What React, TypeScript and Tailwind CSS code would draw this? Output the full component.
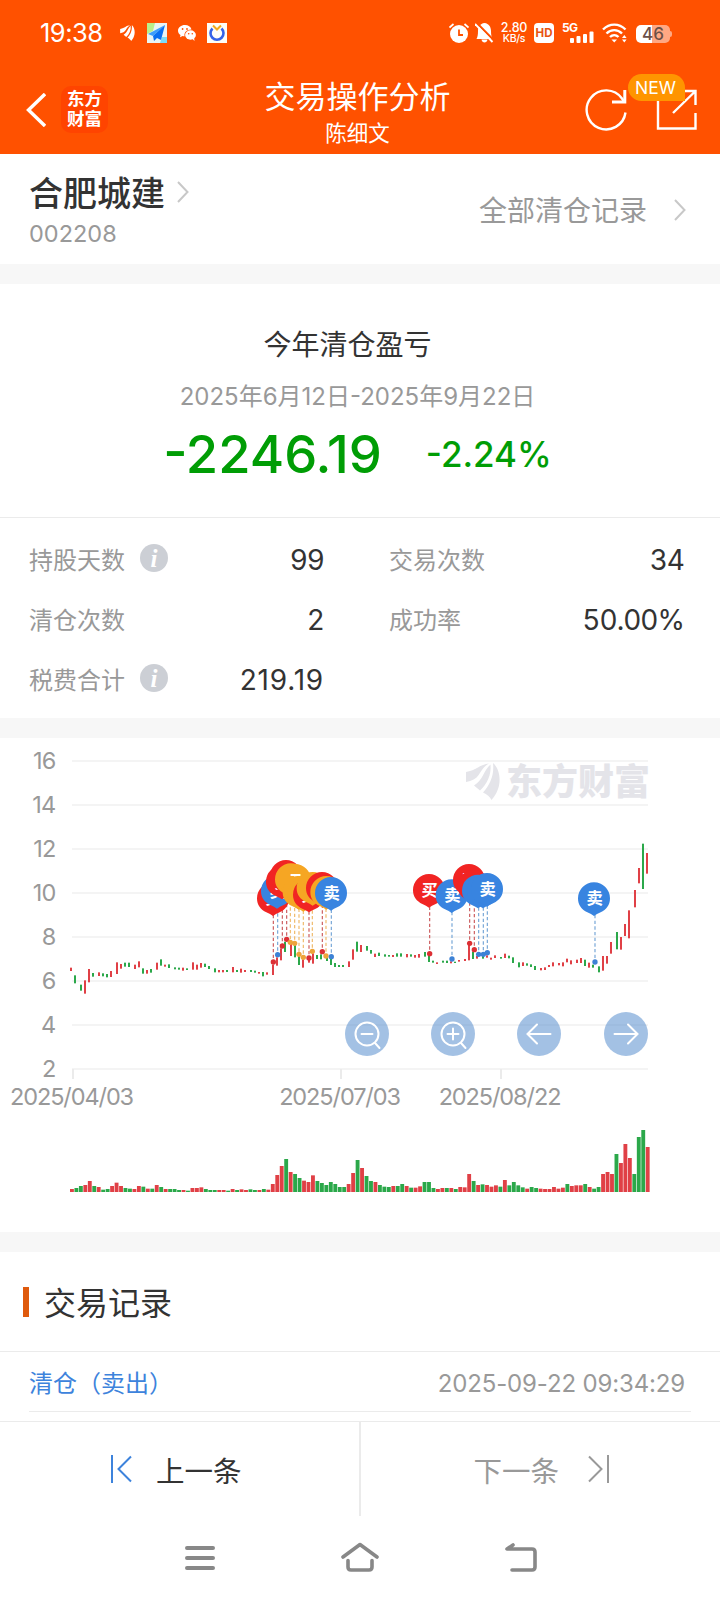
import type { ReactNode } from 'react';

type Tone = 'r' | 'g';
type PinKind = 'buy' | 'sell' | 't';

interface Pin {
    kind: PinKind;
    cx: number;
    cy: number;
    x: number;
    y: number;
    covered?: boolean;
}

const UP = '#e04046';
const DOWN = '#2ba84a';

// [tone, x, high, low] in plot units, three units per pixel
const CANDLES: [Tone, number, number, number][] = [
    ['r', 213, 683, 693], ['g', 225, 706, 730], ['g', 243, 734, 752], ['r', 255, 721, 761], ['r', 267, 687, 727],
    ['g', 279, 699, 710], ['r', 297, 697, 708], ['g', 309, 700, 709], ['g', 321, 702, 712], ['r', 333, 693, 711],
    ['r', 351, 667, 702], ['r', 363, 672, 686], ['g', 375, 668, 680], ['g', 387, 668, 681], ['r', 405, 674, 687],
    ['r', 417, 664, 682], ['g', 429, 685, 701], ['r', 441, 690, 701], ['g', 453, 687, 698], ['r', 471, 668, 689],
    ['g', 483, 658, 677], ['r', 495, 674, 680], ['g', 507, 673, 684], ['g', 525, 682, 688], ['g', 537, 683, 689],
    ['r', 549, 683, 692], ['g', 561, 685, 690], ['r', 579, 667, 689], ['r', 591, 674, 689], ['r', 603, 669, 683],
    ['g', 615, 671, 681], ['g', 627, 678, 687], ['g', 645, 685, 697], ['r', 657, 690, 697], ['r', 669, 690, 697],
    ['g', 681, 690, 696], ['r', 699, 681, 697], ['g', 711, 690, 696], ['r', 723, 686, 698], ['r', 735, 690, 696],
    ['g', 753, 690, 696], ['g', 765, 692, 698], ['r', 777, 696, 701], ['g', 789, 696, 709], ['r', 801, 697, 704],
    ['r', 819, 674, 705], ['r', 831, 652, 677], ['r', 843, 625, 661], ['g', 855, 605, 636], ['r', 873, 612, 648],
    ['g', 885, 608, 652], ['g', 897, 646, 675], ['r', 909, 658, 683], ['r', 927, 650, 668], ['r', 939, 640, 671],
    ['g', 951, 645, 657], ['g', 963, 643, 658], ['g', 981, 652, 663], ['g', 993, 654, 675], ['g', 1005, 669, 681],
    ['g', 1017, 675, 681], ['g', 1029, 675, 681], ['r', 1047, 664, 681], ['r', 1059, 628, 659], ['g', 1071, 605, 635],
    ['r', 1083, 615, 636], ['g', 1101, 618, 632], ['g', 1113, 630, 641], ['r', 1125, 641, 651], ['g', 1137, 638, 648],
    ['g', 1155, 643, 650], ['g', 1167, 645, 650], ['r', 1179, 645, 651], ['g', 1191, 640, 650], ['g', 1203, 640, 650],
    ['r', 1221, 642, 652], ['g', 1233, 643, 650], ['r', 1245, 645, 653], ['r', 1257, 642, 653], ['g', 1275, 636, 650],
    ['g', 1287, 648, 666], ['g', 1299, 662, 668], ['r', 1311, 667, 672], ['g', 1329, 662, 668], ['g', 1341, 662, 669],
    ['r', 1353, 664, 670], ['g', 1365, 665, 669], ['r', 1377, 660, 665], ['r', 1395, 657, 663], ['r', 1407, 615, 661],
    ['g', 1419, 635, 657], ['r', 1431, 648, 656], ['g', 1449, 648, 656], ['r', 1461, 646, 653], ['r', 1473, 653, 659],
    ['r', 1485, 646, 654], ['g', 1503, 651, 656], ['r', 1515, 641, 654], ['g', 1527, 647, 655], ['g', 1539, 652, 669],
    ['g', 1557, 667, 682], ['r', 1569, 667, 678], ['g', 1581, 670, 677], ['g', 1593, 673, 681], ['g', 1605, 678, 690],
    ['r', 1623, 684, 691], ['r', 1635, 682, 690], ['r', 1647, 675, 681], ['r', 1659, 667, 679], ['r', 1677, 669, 676],
    ['r', 1689, 667, 679], ['r', 1701, 656, 667], ['r', 1713, 661, 673], ['r', 1731, 659, 669], ['r', 1743, 654, 669],
    ['g', 1755, 659, 678], ['r', 1767, 668, 683], ['g', 1779, 674, 683], ['g', 1797, 679, 697], ['r', 1809, 648, 692],
    ['r', 1821, 648, 671], ['r', 1833, 606, 641], ['g', 1851, 576, 628], ['r', 1863, 591, 629], ['r', 1875, 552, 588],
    ['r', 1887, 511, 595], ['r', 1905, 450, 502], ['r', 1917, 384, 430], ['g', 1929, 311, 447], ['r', 1941, 339, 401],
];

// one entry per trading day, same units as the candles
const VOLUMES =
    'r9 g12 g18 r21 r33 g18 r15 g7 g9 r18 r28 r18 g12 g10 r9 r18 g16 r10 g10 r21 g15 r9 g9 g9 g6 r6 g4 r12 r12 r14 g9 g6 g6 r6 r6 g4 r9 g6 r8 r6 g8 g6 r6 g9 r7 r24 r51 r78 g99 r60 g54 g42 r34 r30 r50 g33 g27 g21 g30 g24 g15 g15 r24 r57 g96 r72 g48 g33 r30 g21 g16 g15 r18 g18 g24 r18 g13 r13 r17 g30 g30 g12 r9 r12 g12 r12 g9 r15 r14 r54 g33 r21 g23 r21 r16 r20 g16 r36 g20 g30 g20 g14 r10 g15 g12 r10 r9 r9 r15 r10 r13 g24 r18 r20 r20 g24 r15 g10 g15 r54 r60 r54 g114 r87 r144 r102 g54 g165 g186 r135'
        .split(' ')
        .map(v => ({ tone: v[0] as Tone, h: Number(v.slice(1)) }));

// covered pins sit fully behind the next one and carry no label
const PINS: Pin[] = [
    { kind: 'buy', cx: 819, cy: 475, x: 820, y: 666 },
    { kind: 'sell', cx: 831, cy: 453, x: 833, y: 644 },
    { kind: 'buy', cx: 846, cy: 425, x: 847, y: 618 },
    { kind: 'buy', cx: 858, cy: 408, x: 860, y: 598, covered: true },
    { kind: 't', cx: 873, cy: 418, x: 871, y: 607, covered: true },
    { kind: 't', cx: 885, cy: 420, x: 884, y: 610 },
    { kind: 't', cx: 896, cy: 456, x: 897, y: 643, covered: true },
    { kind: 't', cx: 910, cy: 462, x: 910, y: 652, covered: true },
    { kind: 'buy', cx: 927, cy: 464, x: 927, y: 654 },
    { kind: 't', cx: 938, cy: 444, x: 937, y: 634, covered: true },
    { kind: 'buy', cx: 966, cy: 444, x: 967, y: 635, covered: true },
    { kind: 't', cx: 979, cy: 456, x: 978, y: 648, covered: true },
    { kind: 'sell', cx: 993, cy: 459, x: 994, y: 650 },
    { kind: 'buy', cx: 1287, cy: 450, x: 1289, y: 641 },
    { kind: 'sell', cx: 1355, cy: 466, x: 1356, y: 657 },
    { kind: 'buy', cx: 1407, cy: 420, x: 1409, y: 610 },
    { kind: 'buy', cx: 1421, cy: 438, x: 1423, y: 629, covered: true },
    { kind: 'sell', cx: 1434, cy: 452, x: 1436, y: 643, covered: true },
    { kind: 'sell', cx: 1449, cy: 452, x: 1450, y: 643, covered: true },
    { kind: 'sell', cx: 1461, cy: 447, x: 1462, y: 638 },
    { kind: 'sell', cx: 1782, cy: 475, x: 1785, y: 666 },
];

const PIN_STYLE: Record<PinKind, { fill: string; dot: string; line: string; label: string }> = {
    buy: { fill: '#f12423', dot: '#dc2f34', line: '#cc5a5c', label: '买' },
    sell: { fill: '#3884e0', dot: '#3d82d6', line: '#74a5d6', label: '卖' },
    t: { fill: '#f6a623', dot: '#eda43a', line: '#efb968', label: 'T' },
};

const STATS = [
    { label: '持股天数', value: '99', info: true },
    { label: '交易次数', value: '34' },
    { label: '清仓次数', value: '2' },
    { label: '成功率', value: '50.00%' },
    { label: '税费合计', value: '219.19', info: true, wide: true },
];

function Feathers({ className }: { className?: string }) {
    return (
        <svg viewBox="0 0 34 37" className={className} fill="currentColor">
            <path d="M0 9C6 8 9 6 12 4.500 15 2.500 19 1 23 0.500 18 3 16 7 13 11.500 10 16 6 18 0 19Z" />
            <path d="M24.500 1.500C18 7 17 17 8 22.500L14 27.500C21 21 25.500 12 24.500 1.500Z" />
            <path d="M27 0C34 6 35 18 32 26 30 32 27 35 25.500 37 24 34 21 31 17 29.500 24 22 28.500 12 27 0Z" />
        </svg>
    );
}

function Chevron() {
    return (
        <svg width="12" height="22" viewBox="0 0 12 22" fill="none" stroke="#c8c8c8" strokeWidth="2">
            <path d="M1 1L10.500 11L1 21" />
        </svg>
    );
}

function StatusBar() {
    return (
        <div className="flex h-[66px] items-center pl-10 pr-12">
            <span className="w-20 text-[25.5px] tracking-[-0.5px]">19:38</span>
            <Feathers className="h-4 w-[15px]" />
            <svg className="ml-3" width="20" height="20" viewBox="0 0 20 20">
                <rect width="20" height="20" fill="#e9f4f3" />
                <path d="M0 0H8L6 8L0 11Z" fill="#b9ef8b" />
                <path d="M15 14H20V20H13Z" fill="#7cdcf7" />
                <path d="M18 2L1 11L6 13Z" fill="#3b9dfb" />
                <path d="M18 2L6 13L7 18L10 15L14 17Z" fill="#0a6ff0" />
            </svg>
            <svg className="ml-[11px]" width="18" height="16" viewBox="0 0 18 16" fill="white">
                <path d="M7 0C3 0 0 2.500 0 5.700 0 7.500 1 9 2.500 10L2 12.300 4.600 11C5.300 11.200 6 11.300 6.600 11.300 5.700 7.500 8.500 4.400 13.500 4.400 12.800 1.800 10.200 0 7 0Z" />
                <ellipse cx="12.500" cy="10" rx="5.400" ry="4.700" />
                <path d="M14 13.500L16.500 16L16 12Z" />
                <g fill="#ff5100">
                    <circle cx="4.600" cy="4" r="0.900" />
                    <circle cx="9" cy="4" r="0.900" />
                    <circle cx="10.700" cy="8.700" r="0.800" />
                    <circle cx="14.300" cy="8.700" r="0.800" />
                </g>
            </svg>
            <svg className="ml-[11px]" width="20" height="20" viewBox="0 0 20 20" fill="none">
                <rect width="20" height="20" fill="#fdfdf8" />
                <path d="M5.500 5.500A6.500 6.500 0 1 0 14.500 5.500" stroke="#3562e8" strokeWidth="2.600" />
                <path d="M6 2.500L10 6.500L14 2.500" stroke="#f2a91c" strokeWidth="2" />
            </svg>

            <svg className="ml-auto" width="20" height="20" viewBox="0 0 20 20" fill="none">
                <circle cx="10" cy="11" r="9" fill="white" />
                <path d="M0.500 4.500L4.500 1M19.500 4.500L15.500 1" stroke="white" strokeWidth="1.700" />
                <path d="M10 6.500V12H14" stroke="#ff5100" strokeWidth="1.800" />
            </svg>
            <svg className="ml-[6px]" width="19" height="20" viewBox="0 0 19 20" fill="none">
                <path d="M9.500 0C14 0.500 16 4 16 8C16 12 16.500 14 17.500 16H1.500C2.500 14 3 12 3 8C3 4 5 0.500 9.500 0Z" fill="white" />
                <path d="M6.500 16.500H12.500C12 20.500 7 20.500 6.500 16.500Z" fill="white" />
                <path d="M1.800 0L19 17.500" stroke="#ff5100" strokeWidth="2.200" />
                <path d="M0 1L17.500 19" stroke="white" strokeWidth="1.900" />
            </svg>
            <div className="ml-[7px] flex w-[26px] flex-col items-center font-medium">
                <span className="text-[12.5px] leading-[11px] tracking-[-0.2px]">2.80</span>
                <span className="text-[10.5px] leading-[11px] tracking-[-0.3px]">KB/s</span>
            </div>
            <span className="ml-[7px] flex h-5 w-5 items-center justify-center rounded bg-white pt-px text-[11.5px] font-bold text-[#e8540f]">
                HD
            </span>
            <div className="ml-2 flex h-5 w-8 items-end">
                <span className="-mr-[7px] w-[15px] shrink-0 self-start text-[12px] font-bold leading-[10px] tracking-[-0.6px]">5G</span>
                <svg className="shrink-0" width="24" height="12" viewBox="0 0 24 12" fill="white">
                    <rect x="0" y="7" width="4" height="5" rx="1" />
                    <rect x="6.500" y="5" width="4" height="7" rx="1" />
                    <rect x="13" y="3" width="4" height="9" rx="1" />
                    <rect x="19.500" y="0.500" width="4" height="11.500" rx="1" />
                </svg>
            </div>
            <svg className="ml-2" width="25" height="20" viewBox="0 0 25 20" fill="none" stroke="white" strokeWidth="2.400">
                <path d="M1 6.500C7.500 0 17 0 23.500 6.500" />
                <path d="M4.500 10.500C9 6 15.500 6 20 10.500" />
                <path d="M8 14C10.500 11.500 14 11.500 16.500 14" />
                <path d="M9.500 16.500H15L12.250 19.500Z" fill="white" stroke="none" />
                <path d="M20 15L22.300 12L24.600 15ZM20 16.500H24.600L22.300 19.500Z" fill="white" stroke="none" />
            </svg>
            <div className="ml-[9px] mt-0.5 flex items-center">
                <span className="flex h-[18px] w-[34px] items-center justify-center rounded-[5px] bg-linear-to-r from-white from-46% to-[#ffa883] to-46% pt-px text-[17px] font-medium text-[#6b5048]">
                    46
                </span>
                <span className="h-1.5 w-0.5 rounded-r bg-[#ffa883]" />
            </div>
        </div>
    );
}

function Header() {
    return (
        <header className="h-[154px] bg-[#ff5100] text-white">
            <StatusBar />
            <div className="flex h-[88px] items-start pl-[26px] pr-[23px]">
                <div className="flex w-[210px] items-center pt-5">
                    <svg width="20" height="34" viewBox="0 0 20 34" fill="none" stroke="white" strokeWidth="3.400">
                        <path d="M19 1L2.500 17L19 33" />
                    </svg>
                    <div className="ml-[15px] flex h-[47px] w-[47px] flex-col items-center justify-center rounded-[10px] bg-[#ff4400] pb-px text-[17.5px] font-bold leading-[20px]">
                        <span>东方</span>
                        <span>财富</span>
                    </div>
                </div>
                <div className="flex flex-1 flex-col items-center pt-[9px]">
                    <h1 className="text-[31px] leading-[44px]">交易操作分析</h1>
                    <p className="pt-px text-[21.5px] leading-[26px]">陈细文</p>
                </div>
                <div className="flex w-[218px] justify-end gap-[29px] pt-[23px]">
                    <svg width="42" height="42" viewBox="0 0 42 42" fill="none" stroke="white" strokeWidth="2.400">
                        <path d="M40.500 23.500A19.500 19.500 0 1 1 37 9.500L39 12.500" />
                        <path d="M39.800 1V13H27" strokeWidth="3" />
                    </svg>
                    <div className="relative">
                        <svg width="41" height="41" viewBox="0 0 41 41" fill="none" stroke="white" strokeWidth="2.400">
                            <path d="M14 2H2V39.500H39.500V24" />
                            <path d="M28 2H39.500V16M39 2.500L17 24" />
                        </svg>
                        <span className="absolute -left-[28px] -top-[15px] flex h-[27px] w-[57px] items-center justify-center rounded-full rounded-br-md bg-[#ff9500] pt-px pr-0.5 text-[17.5px]">
                            NEW
                        </span>
                    </div>
                </div>
            </div>
        </header>
    );
}

function StockRow() {
    return (
        <section className="flex h-[110px] items-start justify-between pl-[29px] pr-[34px]">
            <div className="pt-[15px]">
                <div className="flex items-center gap-3">
                    <h2 className="pt-[3px] text-[34px] font-medium leading-[43px] text-[#333]">合肥城建</h2>
                    <Chevron />
                </div>
                <p className="pt-px text-[23.5px] leading-9 text-[#999]">002208</p>
            </div>
            <div className="flex items-center gap-[27px] pt-[31px] text-[28px] leading-12 text-[#999]">
                <span className="pt-0.5">全部清仓记录</span>
                <Chevron />
            </div>
        </section>
    );
}

function Summary() {
    return (
        <section className="flex h-[234px] flex-col items-center border-b border-[#ebebeb] pr-[5px] pt-[39px]">
            <h3 className="pr-[20px] text-[28px] leading-11 text-[#333]">今年清仓盈亏</h3>
            <p className="mt-2 text-[24px] leading-11 text-[#999]">2025年6月12日-2025年9月22日</p>
            <div className="mt-[3px] flex items-center gap-[44px] font-medium text-[#009d05]">
                <span className="text-[52.5px] leading-[64px]">-2246.19</span>
                <span className="text-[35px] leading-[60px]">-2.24%</span>
            </div>
        </section>
    );
}

function Stats() {
    return (
        <section className="grid h-[200px] grid-cols-2 content-start pt-[12px]">
            {STATS.map(stat => (
                <div key={stat.label} className="flex h-[60px] items-center pl-[29px] pr-9">
                    <span className="pt-0.5 text-[24px] text-[#999]">{stat.label}</span>
                    {stat.info && (
                        <span className="mb-1 ml-[15px] flex h-7 w-7 items-center justify-center rounded-full bg-[#cccfd5] font-['Liberation_Serif',serif] text-[25px] font-bold italic leading-none text-white">
                            i
                        </span>
                    )}
                    <span className={`ml-auto text-[28px] text-[#333] ${stat.wide ? 'tracking-[0.8px]' : 'tabular-nums tracking-[-1px]'}`}>
                        {stat.value}
                    </span>
                </div>
            ))}
        </section>
    );
}

function PinMark({ pin }: { pin: Pin }) {
    const style = PIN_STYLE[pin.kind];
    return (
        <g>
            <path
                transform={`translate(${pin.cx} ${pin.cy})`}
                d="M-48 0A48 48 0 1 1 48 0C48 20 37 34 20 42Q8 47 0 53Q-8 47 -20 42C-37 34 -48 20 -48 0Z"
                fill={style.fill}
            />
            {!pin.covered && (
                <text x={pin.cx + 2} y={pin.cy + 18} textAnchor="middle" fontSize="49" fontWeight="700" fill="white">
                    {style.label}
                </text>
            )}
        </g>
    );
}

function RoundButton({ cx, children }: { cx: number; children: ReactNode }) {
    return (
        <g transform={`translate(${cx} 1034)`} fill="none" stroke="white" strokeWidth="2" strokeLinecap="round">
            <circle r="22" fill="#4784c9" fillOpacity="0.5" stroke="none" />
            {children}
        </g>
    );
}

function Chart() {
    const levels = [16, 14, 12, 10, 8, 6, 4, 2];
    const dates = [
        { x: 73, label: '2025/04/03' },
        { x: 341, label: '2025/07/03' },
        { x: 501, label: '2025/08/22' },
    ];

    return (
        <svg className="block" width="720" height="494" viewBox="0 738 720 494">
            {levels.map((level, i) => (
                <g key={level}>
                    <rect x="72" y={760 + i * 44} width="576" height="2" fill="#f4f4f4" />
                    <text x="55.500" y={769 + i * 44} textAnchor="end" fontSize="23.500" letterSpacing="-0.800" fill="#999">
                        {level}
                    </text>
                </g>
            ))}
            {dates.map(date => (
                <g key={date.label}>
                    <rect x={date.x - 1} y="1069" width="2" height="10" fill="#ebebeb" />
                    <text x={date.x - 1.5} y="1105" textAnchor="middle" fontSize="23.500" letterSpacing="-1.100" fill="#999">
                        {date.label}
                    </text>
                </g>
            ))}

            {/* Watermark */}
            <g color="#e4e4e9">
                <svg x="466" y="763" width="34" height="37">
                    <Feathers />
                </svg>
                <text x="506" y="795" fontSize="36" fontWeight="900" fill="currentColor">
                    东方财富
                </text>
            </g>

            <g transform="translate(0 740) scale(0.33333)">
                {CANDLES.map(([tone, x, high, low]) => (
                    <rect key={x} x={x - 3} y={high} width="6" height={low - high} fill={tone === 'r' ? UP : DOWN} />
                ))}
                {PINS.map(pin => (
                    <g key={pin.x}>
                        <path
                            d={`M${pin.x} ${pin.cy + 50}V${pin.y}`}
                            stroke={PIN_STYLE[pin.kind].line}
                            strokeWidth="3.500"
                            strokeDasharray="10 7"
                        />
                        <circle cx={pin.x} cy={pin.y} r="8" fill={PIN_STYLE[pin.kind].dot} />
                    </g>
                ))}
                {PINS.map(pin => (
                    <PinMark key={pin.x} pin={pin} />
                ))}
            </g>

            {/* Zoom and pan */}
            <RoundButton cx={367}>
                <circle r="11.500" />
                <path d="M-5.500 0H5.500M8 9L12.500 14" />
            </RoundButton>
            <RoundButton cx={453}>
                <circle r="11.500" />
                <path d="M-5.500 0H5.500M0 -5.500V5.500M8 9L12.500 14" />
            </RoundButton>
            <RoundButton cx={539}>
                <path d="M11.500 0H-11.500M-2 -9.500L-11.500 0L-2 9.500" />
            </RoundButton>
            <RoundButton cx={626}>
                <path d="M-11.500 0H11.500M2 -9.500L11.500 0L2 9.500" />
            </RoundButton>

            <g transform="translate(70 1192) scale(0.33333)">
                {VOLUMES.map((bar, i) => (
                    <rect key={i} x={i * 13.39} y={-bar.h} width="11.600" height={bar.h} fill={bar.tone === 'r' ? UP : DOWN} />
                ))}
            </g>
        </svg>
    );
}

function Records() {
    return (
        <section className="h-[169px]">
            <div className="flex h-[100px] items-center gap-[15px] border-b border-[#ebebeb] pl-[23px]">
                <span className="h-[30px] w-1.5 bg-[#df5a0d]" />
                <h3 className="mt-1 text-[32px] text-[#333]">交易记录</h3>
            </div>
            <div className="mx-[29px] flex h-[60px] items-center justify-between border-b border-[#ebebeb] pr-[6px] pt-1 text-[24px]">
                <span className="text-[#3d83dc]">清仓（卖出）</span>
                <time className="text-[#999] tracking-[-0.15px]">2025-09-22 09:34:29</time>
            </div>
        </section>
    );
}

function Pager() {
    return (
        <div className="flex h-[95px] border-t border-[#ebebeb] text-[28.5px]">
            <button className="flex flex-1 items-center gap-[24px] border-r-2 border-[#ebebeb] pl-[111px] text-[#333]">
                <svg width="21" height="28" viewBox="0 0 21 28" fill="none" stroke="#3d83dc" strokeWidth="2">
                    <path d="M1 0V28M20 1.500L7.500 14L20 26.500" />
                </svg>
                <span className="pt-1.5">上一条</span>
            </button>
            <button className="flex flex-1 items-center justify-end gap-[29px] pr-[111px] text-[#999]">
                <span className="pt-1.5">下一条</span>
                <svg width="21" height="28" viewBox="0 0 21 28" fill="none" stroke="#999" strokeWidth="2">
                    <path d="M20 0V28M1 1.500L13.500 14L1 26.500" />
                </svg>
            </button>
        </div>
    );
}

function SystemNav() {
    return (
        <nav className="flex h-[84px] items-center justify-center gap-[125px] pb-[3px]">
            <svg width="32" height="30" viewBox="0 0 32 30" stroke="#888" strokeWidth="4" strokeLinecap="round">
                <path d="M3 6H29M3 16H29M3 26H29" />
            </svg>
            <svg width="38" height="30" viewBox="0 0 38 30" fill="none" stroke="#888" strokeWidth="3.600" strokeLinecap="round" strokeLinejoin="round">
                <path d="M2 15L19 2.500L36 15" />
                <path d="M7 18.500V25Q7 28 10 28H28Q31 28 31 25V18.500" />
            </svg>
            <svg width="33" height="30" viewBox="0 0 33 30" fill="none" stroke="#888" strokeWidth="3.600" strokeLinecap="round" strokeLinejoin="round">
                <path d="M9 3L3 7H28Q31 7 31 10V25Q31 28 28 28H8" />
            </svg>
        </nav>
    );
}

export default function App() {
    return (
        <div className="h-[1600px] w-[720px] overflow-hidden bg-white font-[Inter,'Noto_Sans_CJK_SC',sans-serif]">
            <Header />
            <StockRow />
            <div className="h-5 bg-[#f7f7f7]" />
            <Summary />
            <Stats />
            <div className="h-5 bg-[#f7f7f7]" />
            <Chart />
            <div className="h-5 bg-[#f7f7f7]" />
            <Records />
            <Pager />
            <SystemNav />
        </div>
    );
}
